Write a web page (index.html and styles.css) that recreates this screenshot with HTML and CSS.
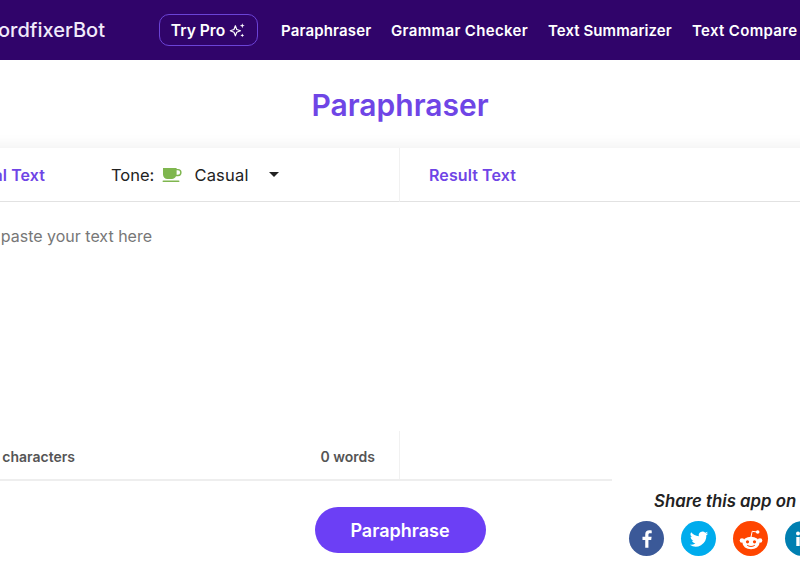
FILE: index.html
```html
<!DOCTYPE html>
<html lang="en">
<head>
<meta charset="utf-8">
<title>Paraphraser</title>
<link rel="stylesheet" href="styles.css">
</head>
<body>
<div class="page">
  <header class="topbar">
    <span class="logo">WordfixerBot</span>
    <a class="pro">Try Pro
      <svg class="sparkle" width="17" height="17" viewBox="0 0 16 16"><path d="M6 3.500 7.300 7 10.800 8.300 7.300 9.600 6 13 4.700 9.600 1.200 8.300 4.700 7Z" fill="none" stroke="#fff" stroke-width="1.100" stroke-linejoin="round"/><path d="M12.500 1.200 13.100 2.900 14.800 3.500 13.100 4.100 12.500 5.800 11.900 4.100 10.200 3.500 11.900 2.900ZM12.500 10.800 13 12.100 14.300 12.600 13 13.100 12.500 14.400 12 13.100 10.700 12.600 12 12.100Z" fill="#fff"/></svg>
    </a>
    <nav class="nav">
      <a class="nav-p">Paraphraser</a>
      <a class="nav-g">Grammar Checker</a>
      <a class="nav-s">Text Summarizer</a>
      <a class="nav-c">Text Compare</a>
    </nav>
  </header>
  <h1 class="title">Paraphraser</h1>
  <section class="editor">
    <div class="pane pane-left">
      <div class="pane-head">
        <span class="pane-label left-label">Original Text</span>
        <div class="tone">
          <span class="tone-label">Tone:</span>
          <svg class="cup" width="20" height="16" viewBox="0 0 20 16"><path d="M1 1h13.600v1h1.400a3.400 3.400 0 0 1 0 7.200h-2C13 11 11.600 12 10 12H5.500C3 12 1 10 1 7.500ZM14.600 3.300v4.500h1.300a2.250 2.250 0 0 0 0-4.500Z" fill="#7fb64f" fill-rule="evenodd"/><rect x="0.500" y="13.500" width="17" height="1.600" rx=".8" fill="#7fb64f"/></svg>
          <span class="tone-value">Casual</span>
          <span class="caret"></span>
        </div>
      </div>
      <div class="pane-body placeholder">Type or paste your text here</div>
      <div class="pane-foot"><span class="count">0 characters</span><span>0 words</span></div>
    </div>
    <div class="pane">
      <div class="pane-head head-right"><span class="pane-label">Result Text</span></div>
      <div class="pane-body"></div>
      <div class="pane-foot"></div>
    </div>
  </section>
  <div class="actions">
    <button class="submit">Paraphrase</button>
    <aside class="share">
      <div class="share-title">Share this app on</div>
      <div class="share-icons">
        <span class="circle fb"><svg width="22" height="22" viewBox="0 0 20 20"><path d="M11.300 18v-7.200h2.500l.4-2.900h-2.900V6.200c0-.9.3-1.400 1.500-1.400h1.500V2.200c-.4 0-1.200-.1-2.200-.1-2.200 0-3.700 1.300-3.700 3.800v2H5.900v2.900h2.500V18Z" fill="#fff"/></svg></span>
        <span class="circle tw"><svg width="22" height="22" viewBox="0 0 24 24"><path d="M22 5.900c-.7.300-1.500.5-2.400.6.900-.5 1.500-1.300 1.800-2.300-.8.500-1.700.8-2.600 1a4.100 4.100 0 0 0-7 3.700C8.400 8.700 5.400 7.100 3.400 4.600a4.100 4.100 0 0 0 1.300 5.500c-.7 0-1.300-.2-1.900-.5 0 2 1.400 3.700 3.300 4.100-.6.200-1.200.2-1.800.1.500 1.600 2 2.800 3.800 2.800A8.300 8.300 0 0 1 2 18.300 11.600 11.600 0 0 0 20 8c.8-.6 1.500-1.300 2-2.100Z" fill="#fff"/></svg></span>
        <span class="circle rd"><svg width="28" height="28" viewBox="0 0 28 28"><ellipse cx="14" cy="18" rx="8.500" ry="6.200" fill="#fff"/><circle cx="5" cy="15.500" r="2.300" fill="#fff"/><circle cx="23" cy="15.500" r="2.300" fill="#fff"/><circle cx="20.700" cy="7" r="1.800" fill="#fff"/><path d="M14 12 15.200 6.300 20 7" fill="none" stroke="#fff" stroke-width="1"/><circle cx="10.500" cy="16.800" r="1.600" fill="#ff4500"/><circle cx="17.500" cy="16.800" r="1.600" fill="#ff4500"/><path d="M10.500 20.500c2 1.400 5 1.400 7 0" fill="none" stroke="#ff4500" stroke-width="1" stroke-linecap="round"/></svg></span>
        <span class="circle li"><svg width="20" height="20" viewBox="0 0 20 20"><circle cx="5" cy="4.500" r="2" fill="#fff"/><rect x="3.300" y="8" width="3.400" height="9" fill="#fff"/><path d="M9 8h3.200v1.400c.5-.9 1.600-1.600 3-1.600 2.700 0 3.300 1.800 3.300 4.200v5h-3.400v-4.500c0-1.100-.2-2-1.400-2-1.200 0-1.500.9-1.500 2V17H9Z" fill="#fff"/></svg></span>
      </div>
    </aside>
  </div>
</div>
</body>
</html>
```
FILE: styles.css
```css
* { box-sizing: border-box; }
html, body { margin: 0; padding: 0; background: #fff; }
body { width: 800px; height: 576px; overflow: hidden; font-family: "Inter", "Liberation Sans", sans-serif; color: #222; }
.page { width: 800px; height: 576px; overflow: hidden; display: flex; flex-direction: column; }

.topbar { flex: none; width: 1000px; margin-left: -100px; height: 60px; background: #30046a; display: flex; align-items: center; color: #fff; }
.logo { width: 205px; flex: none; text-align: right; font-size: 20px; font-weight: 500; white-space: nowrap; color: #f1eafb; }
.pro { flex: none; margin-left: 54px; width: 99px; height: 32px; border: 1px solid #6b43d6; border-radius: 10px; display: flex; align-items: center; justify-content: center; gap: 4px; font-size: 15.600px; font-weight: 600; }
.nav { margin-left: 23px; display: flex; gap: 20px; flex: none; }
.nav a { font-size: 15px; font-weight: 600; white-space: nowrap; display: block; }
.nav-p { width: 90px; letter-spacing: .15px; }
.nav-g { width: 137px; letter-spacing: .35px; }
.nav-s { width: 124px; letter-spacing: .07px; }
.nav-c { width: 105px; letter-spacing: .33px; }

.title { flex: none; height: 80px; margin: 0; padding-top: 10px; display: flex; align-items: center; justify-content: center; font-size: 30px; font-weight: 600; color: #6f45e6; }

.editor { flex: none; width: 1000px; margin-left: -100px; height: 333px; margin-top: 8px; display: grid; grid-template-columns: 500px 500px; border-bottom: 2px solid #eee; box-shadow: 0 -8px 12px -4px #f3f3f3; }
.pane { display: flex; flex-direction: column; min-width: 0; }
.pane-left .pane-head, .pane-left .pane-foot { border-right: 1px solid #f1f1f1; }
.pane-head { flex: none; height: 54px; display: flex; align-items: center; border-bottom: 1px solid #e2e2e2; }
.pane-label { font-size: 16px; font-weight: 600; color: #6f45e6; white-space: nowrap; letter-spacing: .1px; }
.left-label { width: 145px; flex: none; text-align: right; }
.head-right { padding-left: 29px; }
.tone { margin-left: 66px; display: flex; align-items: center; font-size: 16.500px; color: #222; }
.cup { margin-left: 8px; }
.tone-value { margin-left: 12px; letter-spacing: .2px; }
.caret { margin-left: 20px; width: 0; height: 0; border-left: 5px solid transparent; border-right: 5px solid transparent; border-top: 5px solid #222; }
.pane-body { flex: 1; min-height: 0; }
.placeholder { font-size: 16px; color: #777; padding-top: 24px; white-space: nowrap; width: 252px; text-align: right; }
.pane-foot { flex: none; height: 48px; padding-top: 3px; display: flex; align-items: center; justify-content: space-between; font-size: 14px; font-weight: 600; color: #555; padding-right: 24px; }
.count { width: 175px; text-align: right; white-space: nowrap; }

.actions { flex: none; height: 95px; position: relative; display: flex; justify-content: center; align-items: flex-start; padding-top: 26px; }
.submit { width: 171px; height: 46px; border: 0; border-radius: 23px; background: #6c3ff5; color: #fff; font-family: inherit; font-size: 18px; font-weight: 600; }
.share { position: absolute; left: 612px; top: -2px; width: 300px; height: 97px; background: #fff; padding: 12px 0 0 42px; }
.share-title { font-size: 16.800px; font-weight: 600; font-style: italic; color: #222; white-space: nowrap; }
.share-icons { display: flex; gap: 17px; margin-top: 10px; margin-left: -25px; }
.circle { flex: none; width: 35px; height: 35px; border-radius: 50%; display: flex; align-items: center; justify-content: center; }
.fb { background: #3b5998; }
.tw { background: #00aced; }
.rd { background: #ff4500; }
.li { background: #007fb1; }
```
